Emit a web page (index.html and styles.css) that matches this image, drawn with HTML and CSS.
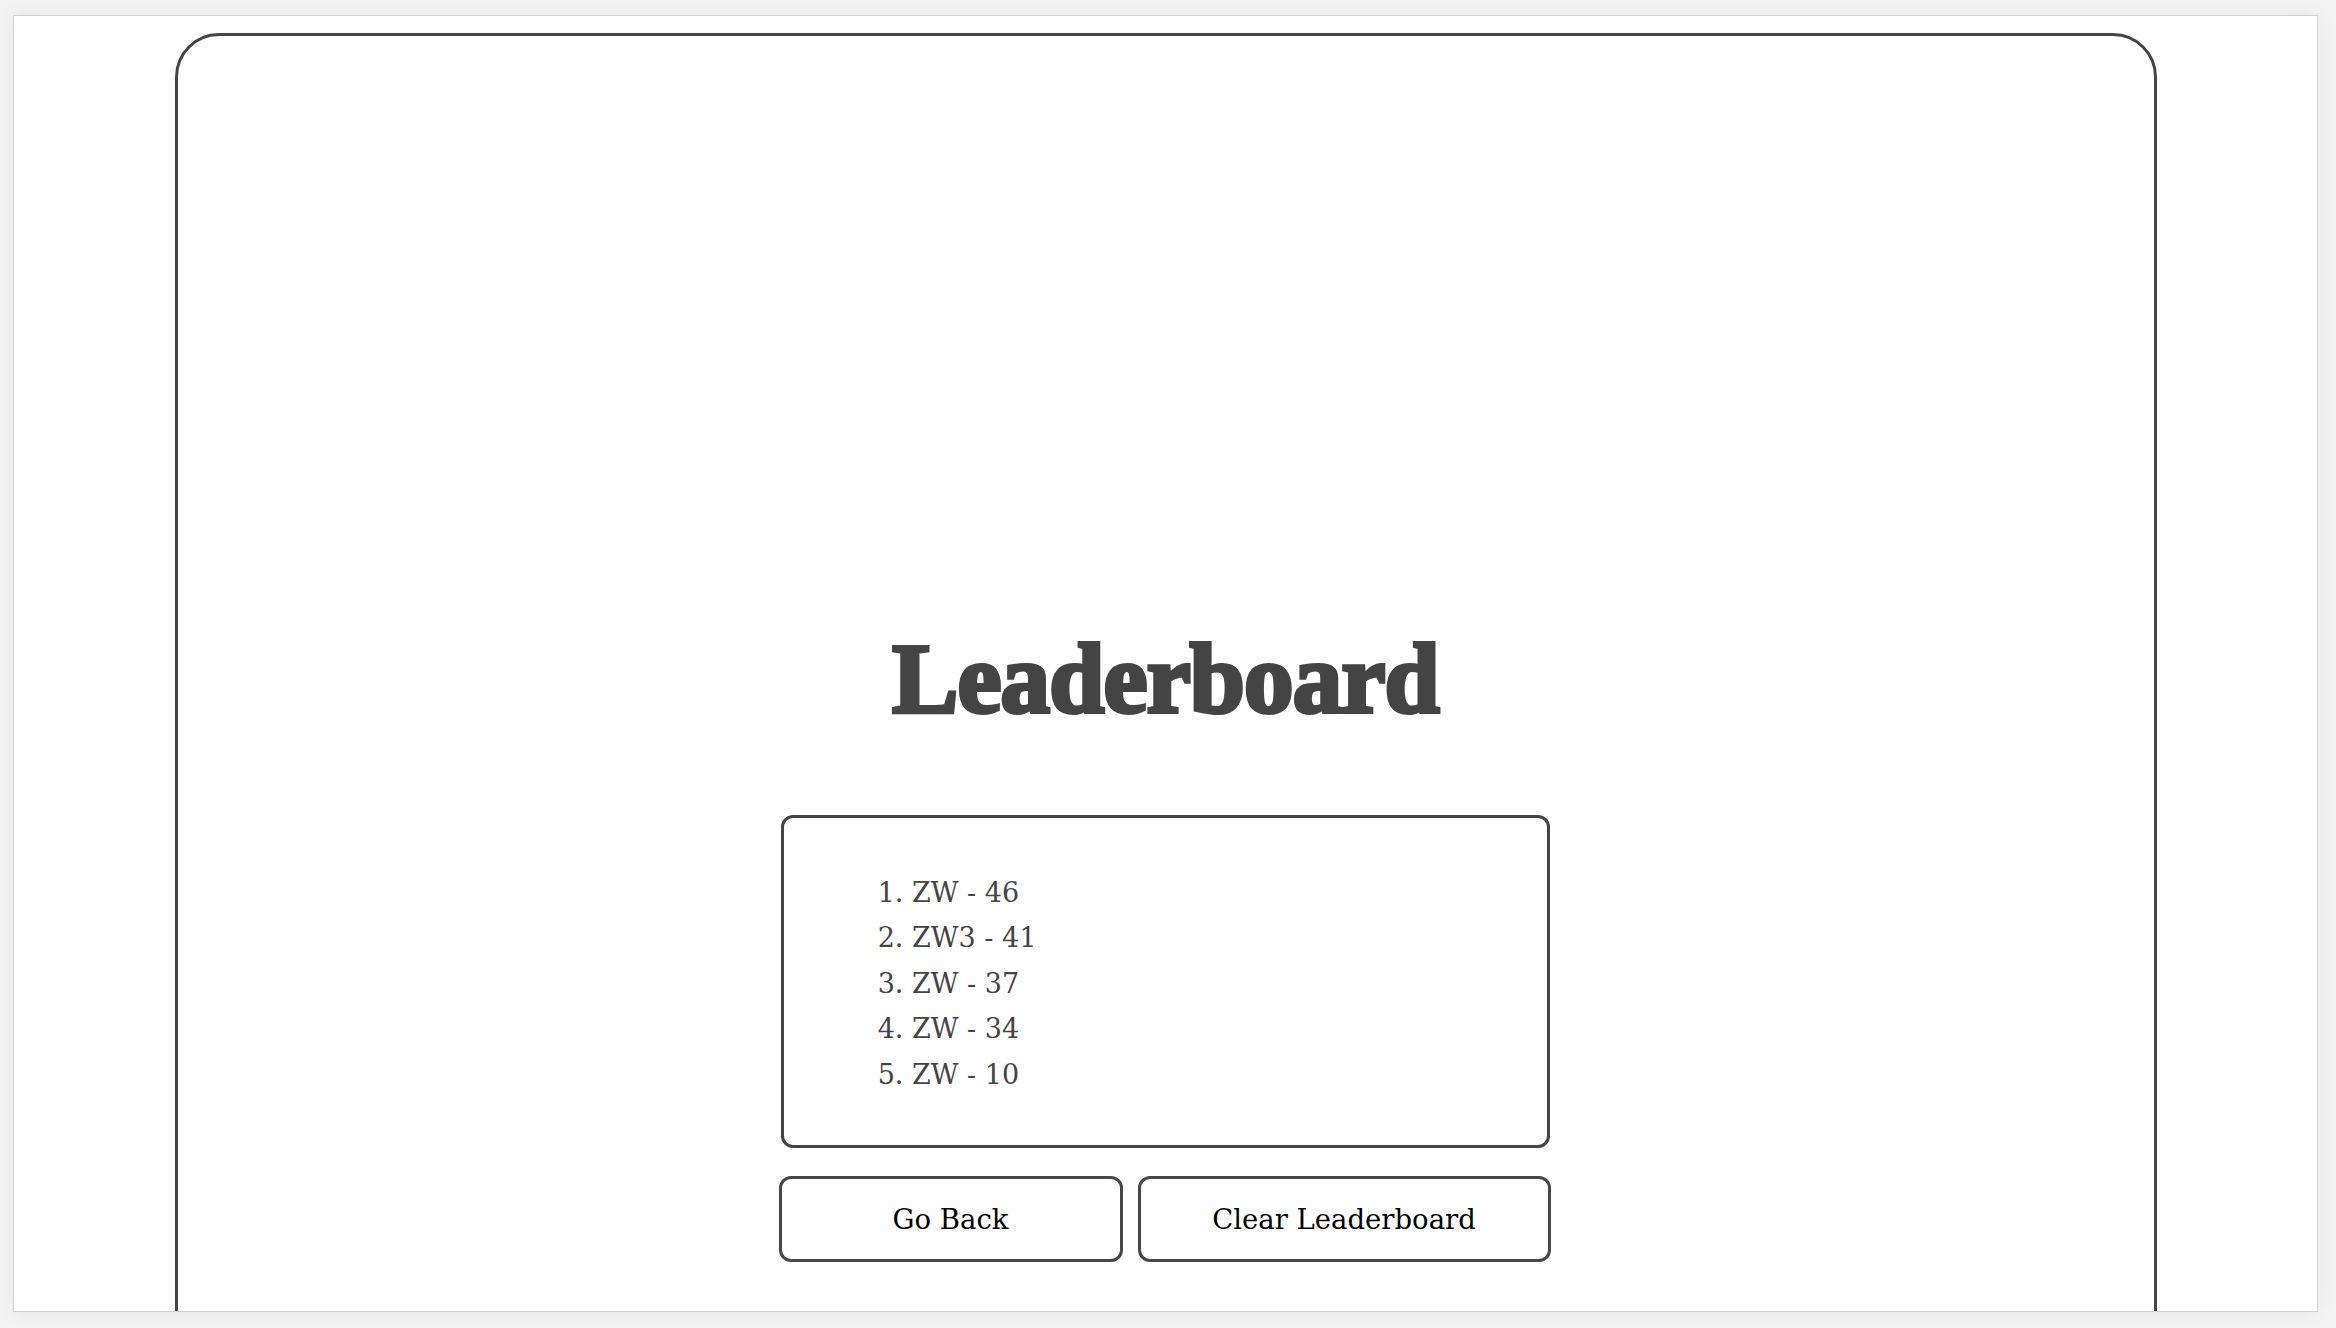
FILE: index.html
```html
<!DOCTYPE html>
<html lang="en">
<head>
<meta charset="utf-8">
<title>Leaderboard</title>
<link rel="stylesheet" href="styles.css">
</head>
<body>
<div class="frame">
  <main class="card">
    <h1 class="title">Leaderboard</h1>
    <section class="scores">
      <ol class="score-list">
        <li>ZW - 46</li>
        <li>ZW3 - 41</li>
        <li>ZW - 37</li>
        <li>ZW - 34</li>
        <li>ZW - 10</li>
      </ol>
    </section>
    <div class="actions">
      <button class="btn btn-back" type="button">Go Back</button>
      <button class="btn btn-clear" type="button">Clear Leaderboard</button>
    </div>
  </main>
</div>
</body>
</html>
```

FILE: styles.css
```css
html, body {
  margin: 0;
  padding: 0;
}

body {
  background: #f3f3f3;
  width: 2336px;
  height: 1328px;
  overflow: hidden;
  padding: 15px 0 0 13px;
  box-sizing: border-box;
}

.frame {
  width: 2305px;
  height: 1297px;
  box-sizing: border-box;
  border: 1px solid #d2d2d2;
  background: #ffffff;
  overflow: hidden;
  box-shadow: 0 0 24px rgba(0, 0, 0, 0.05);
}

.card {
  box-sizing: border-box;
  width: 1982px;
  height: 1400px;
  margin: 17px auto 0;
  border: 3px solid #444444;
  border-radius: 44px;
  padding-top: 593px;
  display: flex;
  flex-direction: column;
  align-items: center;
}

.title {
  margin: 0;
  font-family: "Liberation Serif", "Times New Roman", serif;
  font-weight: 700;
  font-size: 99px;
  line-height: 100px;
  color: #444444;
  -webkit-text-stroke: 4px #444444;
  letter-spacing: -0.8px;
}

.scores {
  box-sizing: border-box;
  width: 769px;
  height: 333px;
  margin-top: 86px;
  border: 3px solid #444444;
  border-radius: 12px;
  padding: 51.5px 0 0 60px;
}

.score-list {
  margin: 0;
  padding-left: 68px;
  font-family: "DejaVu Serif", serif;
  font-size: 27px;
  line-height: 45.5px;
  color: #444444;
}

.actions {
  display: flex;
  gap: 15px;
  margin-top: 28px;
  margin-right: 2px;
}

.btn {
  box-sizing: border-box;
  height: 86px;
  border: 3px solid #484848;
  border-radius: 12px;
  background: #ffffff;
  color: #000000;
  font-family: "DejaVu Serif", serif;
  font-size: 27.5px;
  padding: 0;
}

.btn-back {
  width: 344px;
}

.btn-clear {
  width: 413px;
}
```
